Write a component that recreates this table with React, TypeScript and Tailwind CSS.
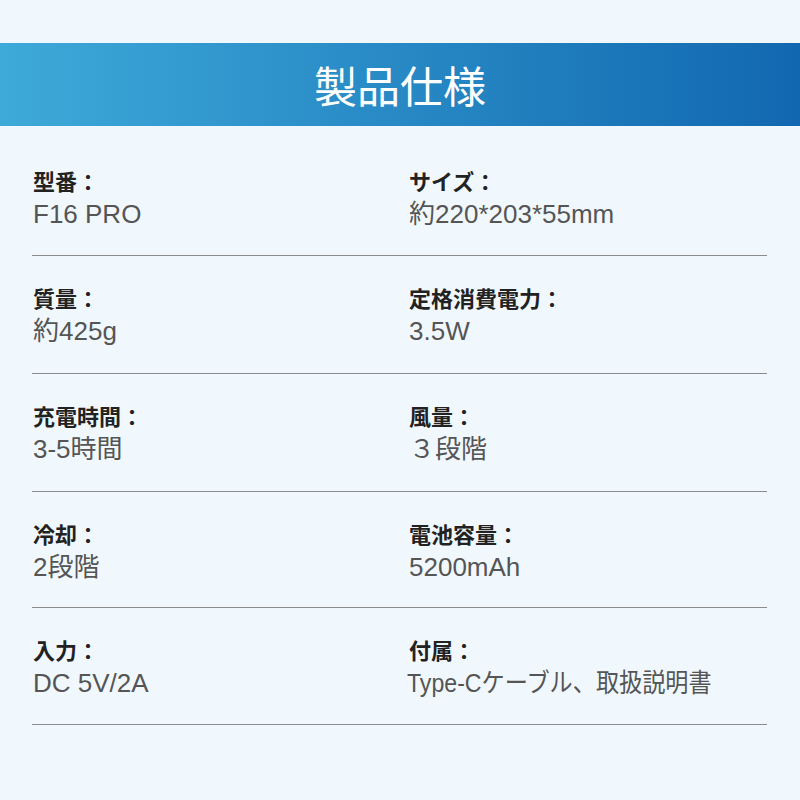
const specs: [string, string, string, string][] = [
  ["型番：", "F16 PRO", "サイズ：", "約220*203*55mm"],
  ["質量：", "約425g", "定格消費電力：", "3.5W"],
  ["充電時間：", "3-5時間", "風量：", "３段階"],
  ["冷却：", "2段階", "電池容量：", "5200mAh"],
  ["入力：", "DC 5V/2A", "付属：", "Type-Cケーブル、取扱説明書"],
];

// bottom padding per row so the rules land where the reference has them
const rowPad = ["pb-[25px]", "pb-[26px]", "pb-[26px]", "pb-[24px]", "pb-[25px]"];

function Cell({ label, value, tight }: { label: string; value: string; tight?: boolean }) {
  return (
    <div className="flex flex-col items-start">
      <span className="text-[22px] leading-[30px] font-bold text-[#222]">{label}</span>
      <span
        className={
          tight
            ? "-ml-[2px] inline-block origin-left scale-x-[0.89] text-[26px] leading-[32px] whitespace-nowrap text-[#555]"
            : "text-[26px] leading-[32px] whitespace-nowrap text-[#555]"
        }
      >
        {value}
      </span>
    </div>
  );
}

export default function App() {
  return (
    <div
      className="min-h-[800px] w-[800px] bg-[#f1f8fd] pt-[43px]"
      style={{ fontFamily: '"Liberation Sans", "Noto Sans CJK JP", sans-serif' }}
    >
      <div className="flex h-[83px] items-center justify-center bg-gradient-to-r from-[#3eaad9] to-[#1268b0]">
        <h1
          className="text-[43px] leading-none font-normal text-white"
          style={{ fontFamily: '"Noto Sans CJK JP", sans-serif' }}
        >
          製品仕様
        </h1>
      </div>

      <div className="mt-[13px] flex flex-col px-8">
        {specs.map(([l1, v1, l2, v2], i) => (
          <div
            key={l1}
            className={`grid w-[735px] grid-cols-[376px_1fr] border-b border-[#8b8b8b] pt-[29px] pl-px ${rowPad[i]}`}
          >
            <Cell label={l1} value={v1} />
            <Cell label={l2} value={v2} tight={i === 4} />
          </div>
        ))}
      </div>
    </div>
  );
}
